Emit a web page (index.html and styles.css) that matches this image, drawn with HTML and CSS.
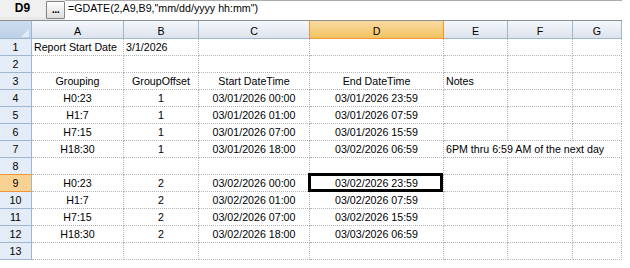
FILE: index.html
```html
<!DOCTYPE html>
<html>
<head>
<meta charset="utf-8">
<title>Sheet</title>
<link rel="stylesheet" href="styles.css">
</head>
<body>
<div class="app">
  <div class="formula-bar">
    <div class="name-box">D9</div>
    <div class="fx-btn"><span>...</span></div>
    <div class="formula">=GDATE(2,A9,B9,"mm/dd/yyyy hh:mm")</div>
  </div>
  <div class="sheet">
    <div class="corner"></div>
    <div class="colh">A</div>
    <div class="colh">B</div>
    <div class="colh pre-sel">C</div>
    <div class="colh sel">D</div>
    <div class="colh">E</div>
    <div class="colh">F</div>
    <div class="colh">G</div>

    <div class="rowh">1</div>
    <div class="c l">Report Start Date</div><div class="c l">3/1/2026</div><div class="c"></div><div class="c"></div><div class="c"></div><div class="c"></div><div class="c"></div>

    <div class="rowh">2</div>
    <div class="c"></div><div class="c"></div><div class="c"></div><div class="c"></div><div class="c"></div><div class="c"></div><div class="c"></div>

    <div class="rowh">3</div>
    <div class="c">Grouping</div><div class="c">GroupOffset</div><div class="c">Start DateTime</div><div class="c">End DateTime</div><div class="c l">Notes</div><div class="c"></div><div class="c"></div>

    <div class="rowh">4</div>
    <div class="c">H0:23</div><div class="c">1</div><div class="c">03/01/2026 00:00</div><div class="c">03/01/2026 23:59</div><div class="c"></div><div class="c"></div><div class="c"></div>

    <div class="rowh">5</div>
    <div class="c">H1:7</div><div class="c">1</div><div class="c">03/01/2026 01:00</div><div class="c">03/01/2026 07:59</div><div class="c"></div><div class="c"></div><div class="c"></div>

    <div class="rowh">6</div>
    <div class="c">H7:15</div><div class="c">1</div><div class="c">03/01/2026 07:00</div><div class="c">03/01/2026 15:59</div><div class="c"></div><div class="c"></div><div class="c"></div>

    <div class="rowh">7</div>
    <div class="c">H18:30</div><div class="c">1</div><div class="c">03/01/2026 18:00</div><div class="c">03/02/2026 06:59</div><div class="c l span3">6PM thru 6:59 AM of the next day</div>

    <div class="rowh pre-sel-row">8</div>
    <div class="c"></div><div class="c"></div><div class="c"></div><div class="c"></div><div class="c"></div><div class="c"></div><div class="c"></div>

    <div class="rowh sel-row">9</div>
    <div class="c">H0:23</div><div class="c">2</div><div class="c">03/02/2026 00:00</div><div class="c active">03/02/2026 23:59</div><div class="c"></div><div class="c"></div><div class="c"></div>

    <div class="rowh">10</div>
    <div class="c">H1:7</div><div class="c">2</div><div class="c">03/02/2026 01:00</div><div class="c">03/02/2026 07:59</div><div class="c"></div><div class="c"></div><div class="c"></div>

    <div class="rowh">11</div>
    <div class="c">H7:15</div><div class="c">2</div><div class="c">03/02/2026 07:00</div><div class="c">03/02/2026 15:59</div><div class="c"></div><div class="c"></div><div class="c"></div>

    <div class="rowh">12</div>
    <div class="c">H18:30</div><div class="c">2</div><div class="c">03/02/2026 18:00</div><div class="c">03/03/2026 06:59</div><div class="c"></div><div class="c"></div><div class="c"></div>

    <div class="rowh">13</div>
    <div class="c"></div><div class="c"></div><div class="c"></div><div class="c"></div><div class="c"></div><div class="c"></div><div class="c"></div>
  </div>
</div>
</body>
</html>
```

FILE: styles.css
```css
* {
  box-sizing: border-box;
}

html, body {
  margin: 0;
  padding: 0;
  background: #ffffff;
}

body {
  font-family: "Liberation Sans", Arial, sans-serif;
  font-size: 10.67px;
  color: #000;
}

.app {
  width: 622px;
}

.formula-bar {
  display: flex;
  height: 21px;
  background: #e9e9e9;
  border-bottom: 1px solid #8e8e8e;
}

.name-box {
  width: 45px;
  height: 17px;
  background: #f0f0f0;
  font-weight: bold;
  font-size: 12px;
  line-height: 17px;
  text-align: center;
}

.fx-btn {
  width: 19px;
  height: 18px;
  margin: 1px 0 0 1px;
  border: 1px solid #868686;
  border-radius: 1px;
  background: linear-gradient(#fdfdfd, #dedede);
  font-weight: bold;
  font-size: 11px;
  line-height: 16px;
  text-align: center;
  letter-spacing: -0.5px;
}

.fx-btn span {
  position: relative;
  top: -1px;
}

.formula {
  flex: 1;
  height: 20px;
  background: #fff;
  border-top: 1px solid #acacac;
  padding-left: 3px;
  line-height: 15px;
  white-space: nowrap;
}

.sheet {
  display: grid;
  grid-template-columns: 32px 92px 75px 111px 134px 64px 65px 49px;
  grid-template-rows: 18px;
  grid-auto-rows: 17px;
}

.corner {
  position: relative;
  background: linear-gradient(#cfdcee, #bcd0e8);
  border-right: 1px solid #9eb6ce;
  border-bottom: 1px solid #9eb6ce;
}

.corner::after {
  content: "";
  position: absolute;
  right: 2px;
  bottom: 1px;
  width: 8px;
  height: 8px;
  background: #e3ebf6;
  clip-path: polygon(100% 0, 100% 100%, 0 100%);
}

.colh {
  background: linear-gradient(#f5f7fb, #dce3ed);
  border-right: 1px solid #9eb6ce;
  border-bottom: 1px solid #9eb6ce;
  text-align: center;
  padding-top: 2px;
  line-height: 16px;
}

.colh.pre-sel {
  border-right-color: #f29536;
}

.colh.sel {
  background: linear-gradient(#f9dba3, #f1c260);
  border-right-color: #f29536;
  border-bottom-color: #f29536;
}

.rowh {
  background: #e4ecf7;
  border-right: 1px solid #9eb6ce;
  border-bottom: 1px solid #9eb6ce;
  text-align: center;
  line-height: 17px;
}

.rowh.pre-sel-row {
  border-bottom-color: #f29536;
}

.rowh.sel-row {
  background: #f8d293;
  border-bottom-color: #f29536;
}

.c {
  border-right: 1px dotted #b4b4b4;
  border-bottom: 1px dotted #b4b4b4;
  text-align: center;
  white-space: nowrap;
  line-height: 17px;
  padding: 0 2px;
  overflow: visible;
}

.c.l {
  text-align: left;
}

.c.span3 {
  grid-column: span 3;
}

.c.active {
  position: relative;
}

.c.active::after {
  content: "";
  position: absolute;
  left: -2px;
  top: -2px;
  right: 0;
  bottom: -1px;
  border: 3px solid #000;
}
```
